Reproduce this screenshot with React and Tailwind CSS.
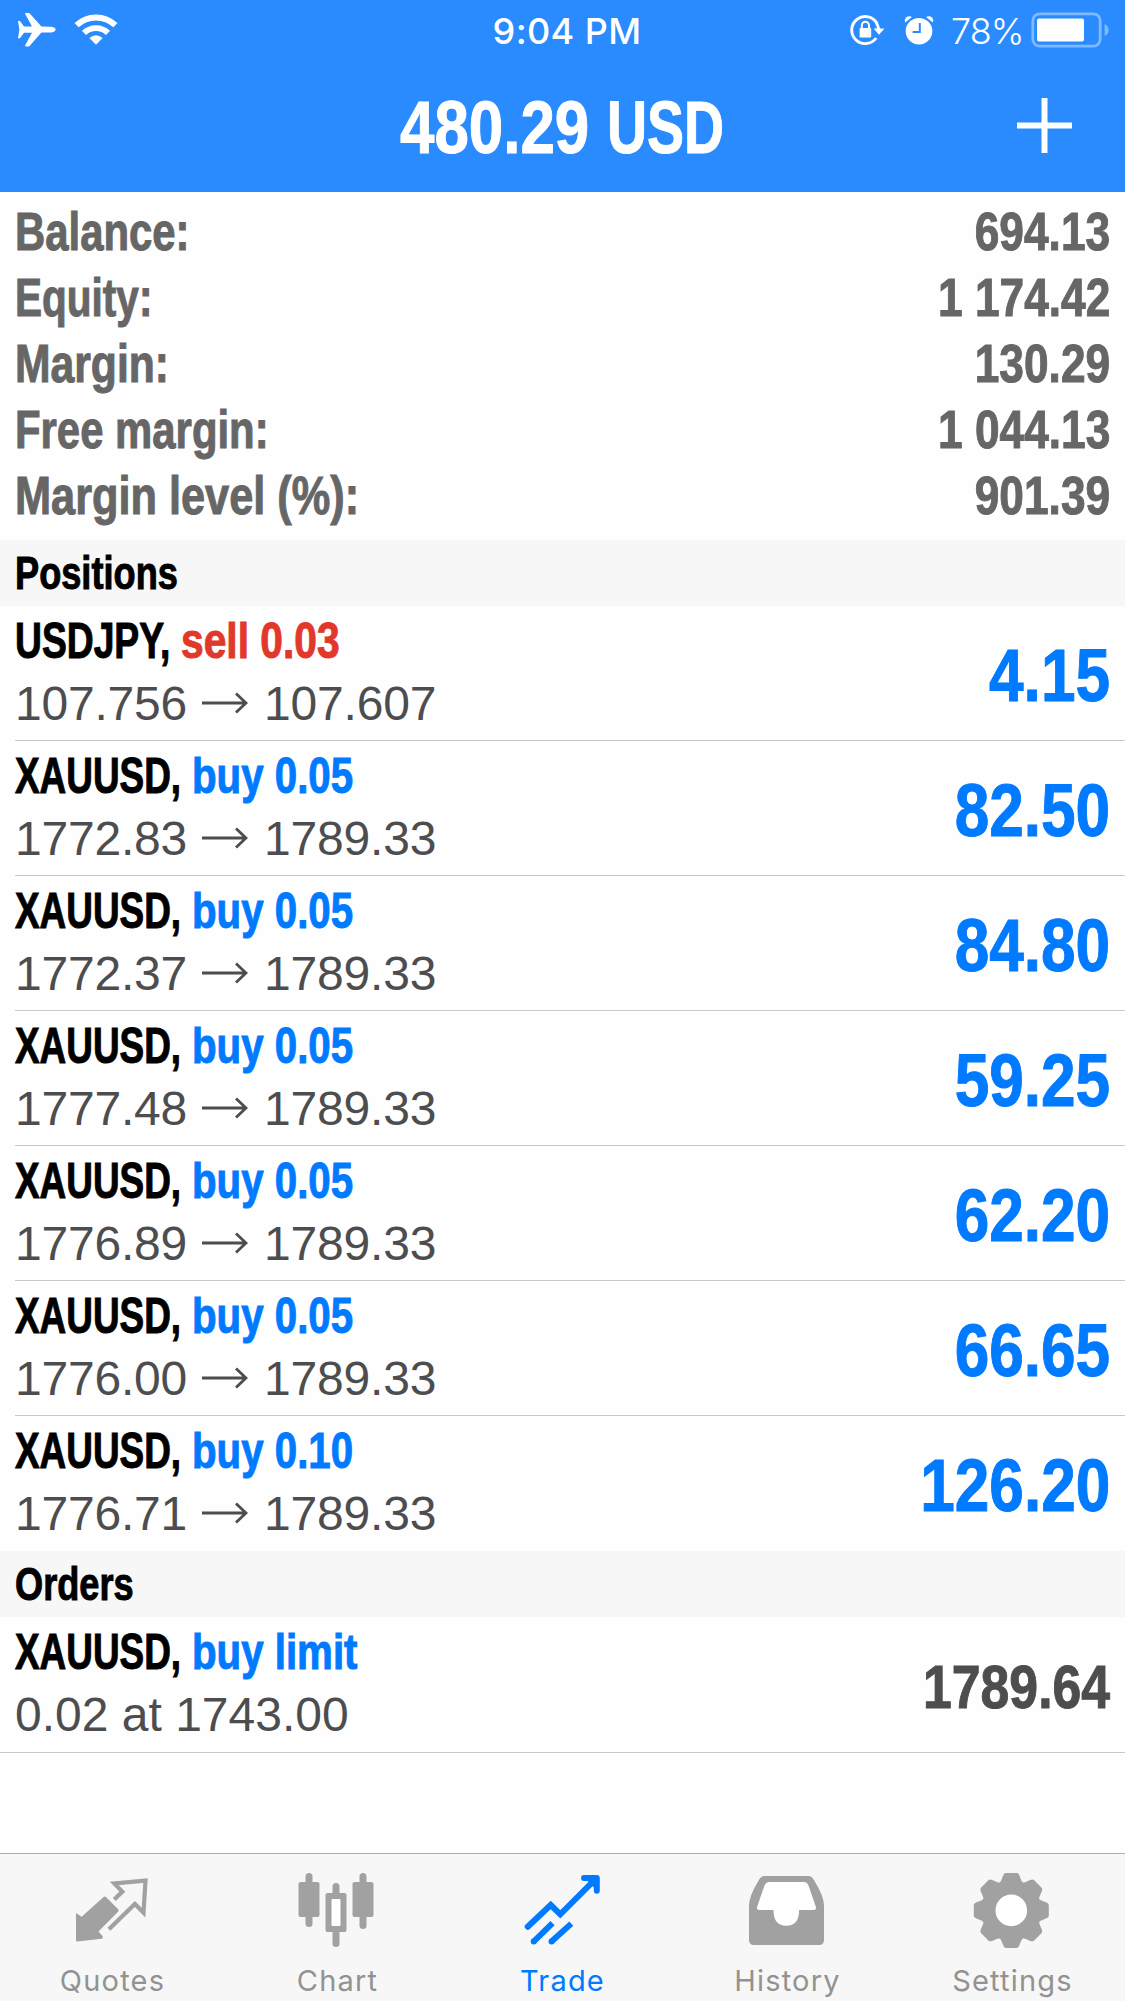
import React from 'react';
import clsx from 'clsx';

const summary = [
  { label: 'Balance:', value: '694.13', scale: 'scale-x-[0.79]' },
  { label: 'Equity:', value: '1 174.42', scale: 'scale-x-[0.765]' },
  { label: 'Margin:', value: '130.29', scale: 'scale-x-[0.805]' },
  { label: 'Free margin:', value: '1 044.13', scale: 'scale-x-[0.79]' },
  { label: 'Margin level (%):', value: '901.39', scale: 'scale-x-[0.817]' },
];

const positions = [
  { id: 1, symbol: 'USDJPY', side: 'sell', volume: '0.03', open: '107.756', current: '107.607', profit: '4.15' },
  { id: 2, symbol: 'XAUUSD', side: 'buy', volume: '0.05', open: '1772.83', current: '1789.33', profit: '82.50' },
  { id: 3, symbol: 'XAUUSD', side: 'buy', volume: '0.05', open: '1772.37', current: '1789.33', profit: '84.80' },
  { id: 4, symbol: 'XAUUSD', side: 'buy', volume: '0.05', open: '1777.48', current: '1789.33', profit: '59.25' },
  { id: 5, symbol: 'XAUUSD', side: 'buy', volume: '0.05', open: '1776.89', current: '1789.33', profit: '62.20' },
  { id: 6, symbol: 'XAUUSD', side: 'buy', volume: '0.05', open: '1776.00', current: '1789.33', profit: '66.65' },
  { id: 7, symbol: 'XAUUSD', side: 'buy', volume: '0.10', open: '1776.71', current: '1789.33', profit: '126.20' },
];

const teeth = [0, 45, 90, 135, 180, 225, 270, 315];

// condensed bold text: regular bold squeezed horizontally, with a thin outline to keep the stems heavy
const Condensed = ({ className, children }) => (
  <span className={clsx('block whitespace-nowrap font-bold [-webkit-text-stroke:1px_currentColor]', className)}>{children}</span>
);

const AirplaneIcon = () => (
  <svg className="w-[38px] h-[36px]" viewBox="0 0 38 36" fill="#fff">
    <path d="M0 9 L2 9 L6 14.4 L14 14.4 L7.2 2 Q6.8 0.9 8 0.9 L10.6 0.9 Q11.4 1 12 1.8 L23.4 14.6 L33.5 14.8 Q37.6 15.4 37.6 17.6 Q37.6 19.8 33.5 20.4 L23.4 20.6 L12 33.4 Q11.4 34.4 10.6 34.4 L8 34.4 Q6.8 34.2 7.2 33.2 L14 20.8 L6 20.8 L2 26.2 L0 26.2 L1.4 17.6 Z" />
  </svg>
);

const WifiIcon = () => (
  <svg className="w-[44px] h-[32px]" viewBox="0 0 44 32" fill="none" stroke="#fff">
    <path d="M2.6 11.2 A 28 28 0 0 1 41.4 11.2" strokeWidth="6" />
    <path d="M10 18.8 A 17.5 17.5 0 0 1 34 18.8" strokeWidth="5.8" />
    <path d="M15.4 24 Q22 18.5 28.6 24 L22 30.8 Z" fill="#fff" stroke="none" />
  </svg>
);

const RotationLockIcon = () => (
  <svg className="w-[36px] h-[32px]" viewBox="0 0 36 32" fill="none" stroke="#fff">
    <path d="M27.2 9.8 A 13.5 13.5 0 1 0 26.2 24" strokeWidth="2.9" />
    <path d="M26.4 9 A 13.5 13.5 0 0 1 28.6 15" strokeWidth="2.9" />
    <path d="M23.6 14.4 H34.4 L29 20.8 Z" fill="#fff" stroke="none" />
    <rect x="9.6" y="14" width="11.6" height="9.4" rx="1" fill="#fff" stroke="none" />
    <path d="M11.8 15 V11.6 A3.6 3.8 0 0 1 19 11.6 V15" strokeWidth="2" />
  </svg>
);

const AlarmIcon = () => (
  <svg className="w-[30px] h-[32px]" viewBox="0 0 30 32" fill="#fff">
    <circle cx="15" cy="17.2" r="13.3" />
    <path d="M1.2 8.4 Q0 5.6 2 3.6 Q4.4 1.4 8 3 Z" />
    <path d="M28.8 8.4 Q30 5.6 28 3.6 Q25.6 1.4 22 3 Z" />
    <path d="M15.8 9 V18 H8.6" fill="none" stroke="#2a8bff" strokeWidth="2" />
  </svg>
);

const BatteryIcon = () => (
  <svg className="w-[80px] h-[36px]" viewBox="0 0 80 36" fill="none">
    <rect x="1.8" y="1.8" width="67.4" height="32.4" rx="7" stroke="#fff" strokeOpacity="0.4" strokeWidth="2.8" />
    <rect x="6" y="6.5" width="47" height="23" rx="2" fill="#fff" />
    <path d="M73.6 12 Q77.6 14 77.6 18 Q77.6 22 73.6 24 Z" fill="#fff" fillOpacity="0.4" />
  </svg>
);

const TabIcon = ({ children }) => (
  <svg className="w-[80px] h-[76px]" viewBox="-1.5 0 80 76" fill="none">{children}</svg>
);

const QuotesIcon = () => (
  <TabIcon>
    <path d="M1.5 41 L7.1 44.8 L29.1 24.9 Q30.3 23.9 31.5 24.9 L43.6 37.2 Q44.8 38.6 43.6 39.8 L24 59.6 L28 64 Q29 66.4 27 66.8 L3 69.6 Q1.5 69.6 1.5 68 Z" fill="#a1a1a1" />
    <path d="M39.8 27.4 L47.8 19.6 L39.8 11.4 L71 8.6 L69 40.6 L60.4 32 L34.4 57.2" stroke="#a1a1a1" strokeWidth="4.2" />
  </TabIcon>
);

const ChartIcon = () => (
  <TabIcon>
    <g fill="#a1a1a1">
      <rect x="6" y="1" width="7" height="54" rx="3.5" />
      <rect x="-1" y="10" width="21" height="35" rx="2" />
      <rect x="33" y="11" width="7" height="64" rx="3.5" />
      <rect x="26" y="21" width="21" height="39" rx="2" />
      <rect x="60" y="1" width="7" height="56" rx="3.5" />
      <rect x="53" y="10" width="21" height="35" rx="2" />
    </g>
    <rect x="32" y="27" width="9" height="27" rx="1" fill="#fff" />
  </TabIcon>
);

const TradeIcon = () => (
  <TabIcon>
    <g stroke="#007aff" strokeWidth="6">
      <path d="M3.2 54.7 L26.2 33 L35.8 42.4 L71 7.2" strokeLinecap="round" />
      <path d="M59.5 6 H72.3 V18.8" strokeLinecap="round" strokeLinejoin="round" />
      <path d="M8.9 69.9 L28 51.2" />
      <path d="M26.7 69.8 L46.8 51.6" />
    </g>
    <path d="M60 6 H72 V18 Z" fill="#007aff" />
    <circle cx="9.2" cy="69.6" r="3" fill="#007aff" />
    <circle cx="27" cy="69.6" r="3" fill="#007aff" />
  </TabIcon>
);

const HistoryIcon = () => (
  <TabIcon>
    <path d="M15 4 H59 Q62.4 4 64.4 8 Q74.5 24 74.5 34 V68 Q74.5 73 69.5 73 H4.5 Q-0.5 73 -0.5 68 V34 Q-0.5 24 9.4 8 Q11.6 4 15 4 Z" fill="#a1a1a1" />
    <path d="M20 10 H54 Q57.6 10 59 13.4 L66.4 35 Q67 38 64.4 38 H49.6 Q49.6 53.8 36.8 53.8 Q24 53.8 24 38 H9.4 Q7 38 7.6 35 L15 13.4 Q16.6 10 20 10 Z" fill="#fff" />
  </TabIcon>
);

const SettingsIcon = () => (
  <TabIcon>
    <g transform="translate(36.8 38.4)" fill="#a1a1a1">
      <circle r="29.6" />
      {teeth.map((a) => (
        <path key={a} transform={`rotate(${a})`} d="M-13 -26.6 C-8.6 -29 -9 -37.5 -5.4 -37.5 H5.4 C9 -37.5 8.6 -29 13 -26.6 Z" />
      ))}
      <circle r="15.8" fill="#fff" />
    </g>
  </TabIcon>
);

const tabs = [
  { name: 'Quotes', Icon: QuotesIcon },
  { name: 'Chart', Icon: ChartIcon },
  { name: 'Trade', Icon: TradeIcon, active: true },
  { name: 'History', Icon: HistoryIcon },
  { name: 'Settings', Icon: SettingsIcon },
];

const StatusBar = () => (
  <div className="grid grid-cols-[1fr_auto_1fr] items-center h-[60px] pl-[18px] pr-[14px] text-white font-['Inter',sans-serif] text-4xl">
    <div className="flex items-center gap-[18px]">
      <AirplaneIcon />
      <WifiIcon />
    </div>
    <span className="pt-[2px] pl-[5px] font-medium tracking-[0.4px]">9:04 PM</span>
    <div className="flex items-center justify-end">
      <RotationLockIcon />
      <span className="ml-[18px]"><AlarmIcon /></span>
      <span className="ml-[17px] pt-[2px] w-[80px] font-light tracking-[-1px]">78%</span>
      <BatteryIcon />
    </div>
  </div>
);

const Header = () => (
  <header className="h-[192px] bg-[#2a8bff]">
    <StatusBar />
    <div className="flex items-center h-[132px] text-white text-[75px] leading-[132px]">
      <div className="w-[400px]" />
      <Condensed className="w-[207px] pt-[1px] scale-x-[0.825] origin-left">480.29</Condensed>
      <Condensed className="w-[410px] pt-[1px] scale-x-[0.74] origin-left">USD</Condensed>
      <svg className="w-[55px] h-[55px] -mt-[2px]" viewBox="0 0 55 55" stroke="#fff" strokeWidth="6">
        <path d="M27.5 0 V55 M0 27.5 H55" />
      </svg>
    </div>
  </header>
);

const SectionTitle = ({ children }) => (
  <div className="h-[66px] bg-[#f7f7f7] pl-[15px] text-[47px] leading-[66px] text-black">
    <Condensed className="scale-x-[0.77] origin-left">{children}</Condensed>
  </div>
);

const SymbolLine = ({ symbol, action, sell }) => (
  <div className="flex text-[50px] leading-[64px]">
    {symbol === 'USDJPY' ? (
      <Condensed className="w-[166px] scale-x-[0.745] origin-left text-black">{symbol},</Condensed>
    ) : (
      <Condensed className="w-[177px] scale-x-[0.738] origin-left text-black">{symbol},</Condensed>
    )}
    <Condensed className={clsx('origin-left', sell ? 'scale-x-[0.815] text-[#e2382b]' : 'scale-x-[0.805] text-[#007aff]')}>{action}</Condensed>
  </div>
);

const PositionRow = ({ position, last }) => (
  <div className={clsx('ml-[15px] flex justify-between h-[135px] pr-[15px]', !last && 'border-b border-[#c8c8c8]')}>
    <div className="pt-[3px]">
      <SymbolLine symbol={position.symbol} action={`${position.side} ${position.volume}`} sell={position.side === 'sell'} />
      <div className="flex items-center text-5xl leading-[62px] tracking-[-0.2px] text-[#4d4d4f]">
        <span>{position.open}</span>
        <svg className="w-[46px] h-[22px] ml-[15px] mr-[16px] -mt-[2px]" viewBox="0 0 46 22" fill="none" stroke="#4d4d4f" strokeWidth="2.8">
          <path d="M0 11 H44 M34 1.5 L44 11 L34 20.5" />
        </svg>
        <span>{position.current}</span>
      </div>
    </div>
    <Condensed className="scale-x-[0.84] origin-right text-[74px] leading-[139px] text-[#007aff]">{position.profit}</Condensed>
  </div>
);

const OrderRow = () => (
  <div className="flex justify-between h-[136px] pl-[15px] pr-[15px] border-b border-[#c8c8c8]">
    <div className="pt-[3px]">
      <SymbolLine symbol="XAUUSD" action="buy limit" />
      <div className="text-5xl leading-[62px] text-[#4d4d4f]">0.02 at 1743.00</div>
    </div>
    <Condensed className="scale-x-[0.835] origin-right text-[62px] leading-[139px] text-[#4d4d4f]">1789.64</Condensed>
  </div>
);

const TabBar = () => (
  <nav className="grid grid-cols-5 h-[148px] pt-[18px] border-t border-[#acacac] bg-[#f7f7f7]">
    {tabs.map(({ name, Icon, active }) => (
      <div key={name} className="flex flex-col items-center">
        <Icon />
        <span className={clsx("mt-[13px] font-['Inter',sans-serif] text-[29px] leading-10 tracking-[1.2px]", active ? 'text-[#007aff]' : 'text-[#929292]')}>
          {name}
        </span>
      </div>
    ))}
  </nav>
);

const App = () => {
  return (
    <div className="flex flex-col w-[1125px] h-[2001px] overflow-hidden bg-[#fefefe] font-['Liberation_Sans',Arial,sans-serif]">
      <Header />
      <div className="h-[348px] pt-[7px] px-[15px] text-[53px] leading-[66px] text-[#666]">
        {summary.map((row) => (
          <div key={row.label} className="flex justify-between">
            <Condensed className={clsx('origin-left', row.scale)}>{row.label}</Condensed>
            <Condensed className="scale-x-[0.835] origin-right">{row.value}</Condensed>
          </div>
        ))}
      </div>
      <SectionTitle>Positions</SectionTitle>
      {positions.map((position, i) => (
        <PositionRow key={position.id} position={position} last={i === positions.length - 1} />
      ))}
      <SectionTitle>Orders</SectionTitle>
      <OrderRow />
      <div className="flex-1" />
      <TabBar />
    </div>
  );
};

export default App;
